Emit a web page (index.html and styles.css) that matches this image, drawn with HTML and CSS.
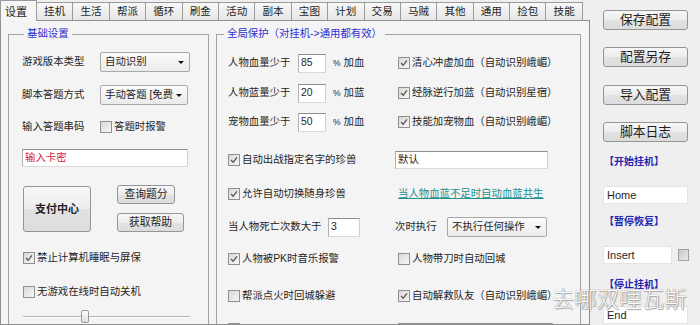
FILE: index.html
```html
<!DOCTYPE html>
<html lang="zh-CN">
<head>
<meta charset="utf-8">
<title>设置</title>
<link rel="stylesheet" href="styles.css">
</head>
<body>
<div class="app">
  <div class="main">
    <div class="tabs">
      <div class="tab active">设置</div>
      <div class="tab">挂机</div>
      <div class="tab">生活</div>
      <div class="tab">帮派</div>
      <div class="tab">循环</div>
      <div class="tab">刷金</div>
      <div class="tab">活动</div>
      <div class="tab">副本</div>
      <div class="tab">宝图</div>
      <div class="tab">计划</div>
      <div class="tab">交易</div>
      <div class="tab">马贼</div>
      <div class="tab">其他</div>
      <div class="tab">通用</div>
      <div class="tab">捡包</div>
      <div class="tab">技能</div>
    </div>
    <div class="panel">
      <fieldset class="group basic">
        <legend>基础设置</legend>
        <div class="gbody">
          <div class="lrow"><span class="lbl">游戏版本类型</span><div class="combo c90">自动识别<i class="dd"></i></div></div>
          <div class="lrow m13"><span class="lbl">脚本答题方式</span><div class="combo c88">手动答题 [免费<i class="dd"></i></div></div>
          <div class="lrow m12"><span class="lbl">输入答题串码</span><span class="cb"></span><span class="cbt">答题时报警</span></div>
          <div class="tinput card m12">输入卡密</div>
          <div class="payblock">
            <div class="btn pay">支付中心</div>
            <div class="paycol">
              <div class="btn small w58">查询题分</div>
              <div class="btn small w67">获取帮助</div>
            </div>
          </div>
          <div class="lrow chk m19"><span class="cb on"><svg viewBox="0 0 12 12"><path d="M2.5 6 L5 8.8 L9.5 2.8"/></svg></span><span class="cbt">禁止计算机睡眠与屏保</span></div>
          <div class="lrow chk m20"><span class="cb"></span><span class="cbt">无游戏在线时自动关机</span></div>
          <div class="slider"><span class="track"></span><span class="thumb"></span></div>
        </div>
      </fieldset>
      <fieldset class="group global">
        <legend>全局保护（对挂机-&gt;通用都有效）</legend>
        <div class="gbody">
          <div class="grow">
            <div class="gc1"><span class="lbl2">人物血量少于</span><div class="tinput num">85</div><span class="pct">%</span><span>加血</span></div>
            <div class="gc2"><span class="cb on"><svg viewBox="0 0 12 12"><path d="M2.5 6 L5 8.8 L9.5 2.8"/></svg></span><span class="cbt">清心冲虚加血（自动识别峨嵋）</span></div>
          </div>
          <div class="grow g10">
            <div class="gc1"><span class="lbl2">人物蓝量少于</span><div class="tinput num">20</div><span class="pct">%</span><span>加蓝</span></div>
            <div class="gc2"><span class="cb on"><svg viewBox="0 0 12 12"><path d="M2.5 6 L5 8.8 L9.5 2.8"/></svg></span><span class="cbt">经脉逆行加蓝（自动识别星宿）</span></div>
          </div>
          <div class="grow g9">
            <div class="gc1"><span class="lbl2">宠物血量少于</span><div class="tinput num">50</div><span class="pct">%</span><span>加血</span></div>
            <div class="gc2"><span class="cb on"><svg viewBox="0 0 12 12"><path d="M2.5 6 L5 8.8 L9.5 2.8"/></svg></span><span class="cbt">技能加宠物血（自动识别峨嵋）</span></div>
          </div>
          <div class="grow g18">
            <div class="gc1"><span class="cb on"><svg viewBox="0 0 12 12"><path d="M2.5 6 L5 8.8 L9.5 2.8"/></svg></span><span class="cbt">自动出战指定名字的珍兽</span></div>
            <div class="gc2"><div class="tinput pet">默认</div></div>
          </div>
          <div class="grow g14">
            <div class="gc1"><span class="cb on"><svg viewBox="0 0 12 12"><path d="M2.5 6 L5 8.8 L9.5 2.8"/></svg></span><span class="cbt">允许自动切换随身珍兽</span></div>
            <div class="gc2"><a class="link">当人物血蓝不足时自动血蓝共生</a></div>
          </div>
          <div class="grow g13">
            <div class="gc1"><span class="lbl3">当人物死亡次数大于</span><div class="tinput num3">3</div></div>
            <div class="gc2"><span class="lbl4">次时执行</span><div class="combo c100">不执行任何操作<i class="dd"></i></div></div>
          </div>
          <div class="grow g12">
            <div class="gc1"><span class="cb on"><svg viewBox="0 0 12 12"><path d="M2.5 6 L5 8.8 L9.5 2.8"/></svg></span><span class="cbt">人物被PK时音乐报警</span></div>
            <div class="gc2"><span class="cb"></span><span class="cbt">人物带刀时自动回城</span></div>
          </div>
          <div class="grow g17">
            <div class="gc1"><span class="cb"></span><span class="cbt">帮派点火时回城躲避</span></div>
            <div class="gc2"><span class="cb on"><svg viewBox="0 0 12 12"><path d="M2.5 6 L5 8.8 L9.5 2.8"/></svg></span><span class="cbt">自动解救队友（自动识别峨嵋）</span></div>
          </div>
          <div class="grow g13">
            <div class="gc1"><span class="cb"></span></div>
            <div class="gc2"><div class="tinput last"></div></div>
          </div>
        </div>
      </fieldset>
    </div>
  </div>
  <div class="side">
    <div class="btn sbtn">保存配置</div>
    <div class="btn sbtn s17">配置另存</div>
    <div class="btn sbtn s18">导入配置</div>
    <div class="btn sbtn s17">脚本日志</div>
    <div class="hk s13">【开始挂机】</div>
    <div class="key s17">Home</div>
    <div class="hk s11">【暂停恢复】</div>
    <div class="keyrow s17"><div class="key short">Insert</div><span class="cb mini"></span></div>
    <div class="hk s14">【停止挂机】</div>
    <div class="key s14">End</div>
  </div>
</div>
<div class="watermark">去哪双哩瓦斯</div>
</body>
</html>
```

FILE: styles.css
```css
* { box-sizing: border-box; }
html, body { margin: 0; padding: 0; }
body {
  width: 700px;
  height: 325px;
  overflow: hidden;
  position: relative;
  background: #efefef;
  font-family: "Liberation Sans", "Noto Sans CJK SC", sans-serif;
  font-size: 10.4px;
  line-height: 14px;
  color: #1f1f1f;
}
.app { display: flex; height: 325px; overflow: hidden; }
.main { width: 590px; flex: none; display: flex; flex-direction: column; }

/* tabs */
.tabs { display: flex; align-items: flex-end; height: 21px; position: relative; z-index: 2; }
.tab {
  flex: 0 0 36.4px;
  height: 18px;
  margin-bottom: 1px;
  border: 1px solid #9b9b9b;
  border-left: none;
  border-bottom: none;
  background: linear-gradient(#f8f8f8, #e6e6e6);
  text-align: center;
  line-height: 17px;
  font-size: 10.6px;
}
.tab.active {
  flex: 0 0 37px;
  height: 21px;
  margin-bottom: 0;
  border-left: 1px solid #9b9b9b;
  background: #f6f6f6;
  line-height: 22px;
  padding-right: 5px;
  font-size: 11px;
}

/* panel */
.panel {
  flex: 1;
  min-height: 0;
  overflow: hidden;
  margin-top: -1px;
  border: 1px solid #8e8f8f;
  background: #f4f4f4;
  display: flex;
  gap: 7px;
  padding: 6px 8px 0 7px;
}
fieldset.group {
  margin: 0;
  padding: 0;
  min-width: 0;
  height: 330px;
  border: 1px solid #a3a3a3;
  flex: none;
}
fieldset.group legend {
  color: #2f2fd2;
  padding: 0 3px;
  line-height: 14px;
  font-size: 10.4px;
}
.basic { width: 201px; }
.basic legend { margin-left: 15px; }
.global { width: 365px; }
.global legend { margin-left: 7px; }
.gbody { display: flex; flex-direction: column; }
.basic .gbody { padding: 11px 0 0 13px; }
.global .gbody { padding: 12px 0 0 11px; }

/* left group */
.lrow { display: flex; align-items: center; height: 20px; }
.lrow.chk { height: 14px; margin-left: 1px; }
.lbl { width: 78px; flex: none; }
.m12 { margin-top: 12px; }
.m13 { margin-top: 13px; }
.m19 { margin-top: 19px; }
.m20 { margin-top: 20px; }

.combo {
  position: relative;
  height: 20px;
  border: 1px solid #a8a8a8;
  border-radius: 2px;
  background: linear-gradient(#fbfbfb, #ebebeb);
  padding: 0 14px 0 4px;
  line-height: 18px;
  white-space: nowrap;
  overflow: hidden;
  flex: none;
}
.combo .dd {
  position: absolute;
  right: 5px;
  top: 8px;
  width: 0;
  height: 0;
  border-left: 3px solid transparent;
  border-right: 3px solid transparent;
  border-top: 3px solid #111;
}
.c90 { width: 90px; }
.c88 { width: 88px; }
.c100 { width: 100px; }

.tinput {
  background: #fff;
  border: 1px solid;
  border-color: #8d8d8d #cfcfcf #d9d9d9 #b0b0b0;
  height: 18px;
  line-height: 16px;
  padding-left: 2px;
  flex: none;
}
.card { width: 166px; color: #d2243f; }

.payblock { display: flex; margin-top: 18px; margin-left: 1px; height: 47px; }
.btn {
  border: 1px solid #959595;
  border-radius: 3px;
  background: linear-gradient(#f7f7f7, #ececec 50%, #e2e2e2 51%, #dcdcdc);
  text-align: center;
  flex: none;
}
.pay { width: 68px; height: 46px; margin-top: 1px; line-height: 44px; font-weight: bold; font-size: 11px; }
.paycol { display: flex; flex-direction: column; gap: 9px; margin-left: 26px; }
.small { height: 19px; line-height: 17px; font-size: 10.8px; }
.w58 { width: 58px; }
.w67 { width: 67px; }

.cb {
  width: 12px;
  height: 12px;
  flex: none;
  border: 1px solid #8f8f8f;
  background: linear-gradient(135deg, #d9d9d9, #f7f7f7);
  display: inline-flex;
}
.cb svg { width: 10px; height: 10px; fill: none; stroke: #505050; stroke-width: 1.5; }
.cbt { margin-left: 2px; white-space: nowrap; }

.slider { position: relative; height: 13px; margin-top: 11px; margin-left: 1px; width: 167px; }
.slider .track { position: absolute; left: 0; right: 0; top: 6px; height: 2px; border-top: 1px solid #b4b4b4; border-bottom: 1px solid #fff; }
.slider .thumb {
  position: absolute; left: 58px; top: 0; width: 8px; height: 13px;
  border: 1px solid #999; border-radius: 2px;
  background: linear-gradient(#fdfdfd, #dedede);
}

/* right group */
.grow { display: flex; align-items: center; height: 20px; }
.gc1 { width: 169px; flex: none; display: flex; align-items: center; }
.gc2 { flex: 1; display: flex; align-items: center; padding-left: 1px; }
.g9 { margin-top: 9px; }
.g10 { margin-top: 10px; }
.g12 { margin-top: 12px; }
.g13 { margin-top: 13px; }
.g14 { margin-top: 14px; }
.g17 { margin-top: 17px; }
.g18 { margin-top: 18px; }
.lbl2 { width: 70px; flex: none; }
.num { width: 28px; height: 19px; }
.pct { margin: 0 3px 0 7px; font-size: 8.5px; }
.lbl3 { width: 100px; flex: none; }
.num3 { width: 32px; height: 19px; }
.pet { width: 153px; margin-left: -3px; }
.link { color: #23908f; text-decoration: underline; white-space: nowrap; }
.lbl4 { width: 52px; flex: none; margin-left: -3px; }
.last { width: 155px; margin-top: 5px; }

/* side */
.side { flex: 1; display: flex; flex-direction: column; padding: 10px 12px 0 13px; }
.sbtn { width: 85px; height: 20px; line-height: 18px; font-size: 12.8px; }
.s11 { margin-top: 11px; }
.s13 { margin-top: 13px; }
.s14 { margin-top: 14px; }
.s17 { margin-top: 17px; }
.s18 { margin-top: 18px; }
.hk { color: #2323b0; font-weight: bold; font-size: 10px; height: 14px; line-height: 14px; margin-left: 1px; }
.key { width: 85px; height: 18px; background: #fff; border: 1px solid #e4e4e4; line-height: 16px; padding-left: 3px; font-size: 11px; flex: none; }
.keyrow { display: flex; align-items: center; height: 18px; }
.key.short { width: 69px; margin-top: 0; }
.cb.mini { width: 11px; height: 12px; margin-left: 6px; border-color: #a0a0a0; background: linear-gradient(135deg, #c8c8c8, #e8e8e8); }

/* watermark overlay */
.watermark {
  position: absolute;
  left: 552px;
  top: 283px;
  font-family: "Noto Sans CJK SC", sans-serif;
  font-size: 22px;
  line-height: 28px;
  letter-spacing: 0.5px;
  color: #ffffff;
  font-weight: 300;
  text-shadow: 0 0 1px #888, 0 0 1px #888, 1px 1px 1px #aaa;
  pointer-events: none;
}
```
